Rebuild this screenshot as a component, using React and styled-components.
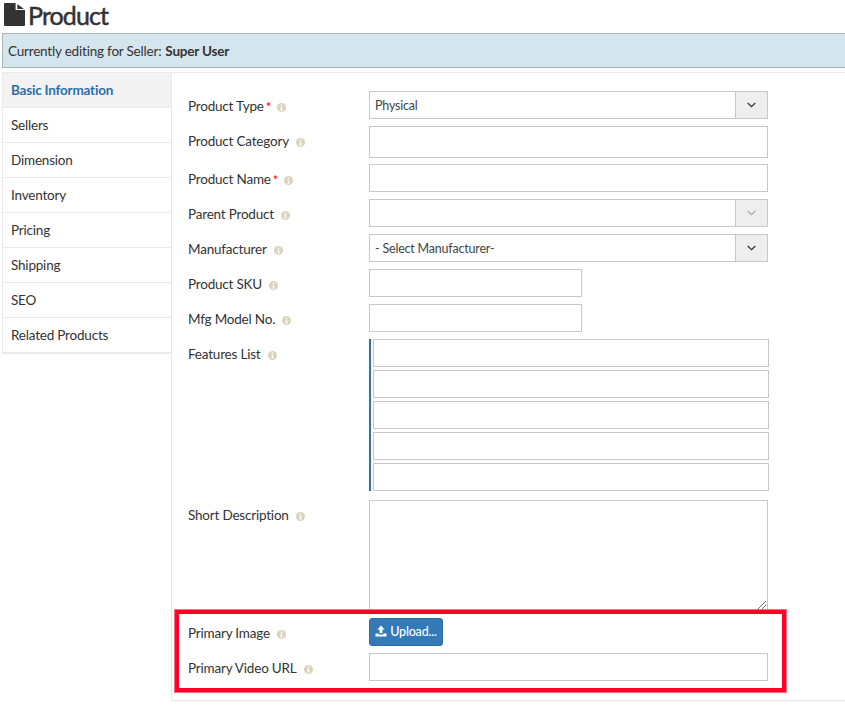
import React from 'react';
import styled, { createGlobalStyle } from 'styled-components';

const GlobalStyle = createGlobalStyle`
    html, body {
        margin: 0;
        padding: 0;
        background: #fff;
    }
    body {
        font-family: Lato, "Open Sans", sans-serif;
        font-size: 13.5px;
        letter-spacing: -0.2px;
        color: #333;
    }
    * {
        box-sizing: border-box;
    }
`;

const Page = styled.div`
    position: relative;
    width: 845px;
    height: 715px;
    overflow: hidden;
`;

const Title = styled.h1`
    display: flex;
    align-items: flex-start;
    gap: 3px;
    height: 33px;
    margin: 0;
    padding: 3px 0 0 4px;
    font-size: 25px;
    line-height: 25px;
    font-weight: 400;
    letter-spacing: -0.9px;
    color: #333;
    -webkit-text-stroke: 0.5px #333;
`;

const Banner = styled.div`
    height: 35px;
    margin-left: 2px;
    padding-left: 5px;
    display: flex;
    align-items: center;
    gap: 4px;
    background: #d5e5ed;
    border: 1px solid #a6b6bc;
    border-right: none;
`;

const Body = styled.div`
    display: flex;
    align-items: flex-start;
    margin: 4px 0 0 2px;
`;

const Sidebar = styled.ul`
    width: 169px;
    flex: none;
    margin: 0;
    padding: 0;
    list-style: none;
    border-top: 1px solid #eaeaea;
    border-left: 1px solid #eaeaea;
    border-bottom: 1px solid #eaeaea;
`;

const SideItem = styled.li`
    height: 35px;
    padding-left: 8px;
    display: flex;
    align-items: center;
    border-bottom: 1px solid #eaeaea;
    background: ${(p) => (p.$active ? '#f3f3f3' : '#fff')};
    color: ${(p) => (p.$active ? '#2d6da8' : '#333')};
    font-weight: ${(p) => (p.$active ? 700 : 400)};
`;

const Panel = styled.div`
    flex: 1;
    height: 629px;
    padding: 18px 0 0 16px;
    border-left: 1px solid #e8e8e8;
    border-top: 1px solid #eaeaea;
    border-bottom: 1px solid #e6e6e6;
`;

const Row = styled.div`
    display: flex;
    align-items: flex-start;
    margin-bottom: ${(p) => p.$gap ?? 7}px;
`;

const Label = styled.div`
    width: 181px;
    flex: none;
    display: flex;
    align-items: center;
    height: 20px;
    margin-top: 5px;
    color: #333;
`;

const Required = styled.sup`
    color: #f00;
    font-size: 13px;
    line-height: 1;
    margin: 0 -1px 0 2px;
    position: relative;
    top: 1px;
    vertical-align: super;
`;

const Info = styled.svg`
    width: 9px;
    height: 9px;
    margin-left: 7px;
    margin-top: 2px;
    flex: none;
`;

const Input = styled.div`
    width: ${(p) => p.$width || 399}px;
    height: ${(p) => p.$height || 28}px;
    flex: none;
    background: #fff;
    border: 1px solid #c8c8c8;
`;

const Select = styled(Input)`
    display: flex;
    align-items: center;
    justify-content: space-between;
    padding-left: 5px;
    font-size: 12.5px;
    color: #444;
`;

const Arrow = styled.span`
    width: 32px;
    height: 100%;
    display: flex;
    align-items: center;
    justify-content: center;
    background: #eeeeee;
    border-left: 1px solid #c8c8c8;
    color: ${(p) => (p.$disabled ? '#aaa' : '#333')};
`;

const FeatureList = styled.div`
    display: flex;
    flex-direction: column;
    gap: 3px;
    padding-left: 2px;
    border-left: 2px solid #2e75b0;
    width: 400px;
`;

const Feature = styled(Input)`
    width: 396px;
`;

const Textarea = styled(Input)`
    position: relative;
    height: 111px;
`;

const Grip = styled.svg`
    position: absolute;
    right: 0;
    bottom: 0;
    width: 10px;
    height: 10px;
`;

const UploadButton = styled.button`
    width: 74px;
    height: 28px;
    padding: 0 0 2px;
    display: flex;
    align-items: center;
    justify-content: center;
    gap: 3px;
    background: #337ab7;
    border: 1px solid #2e6da4;
    border-radius: 3px;
    color: #fff;
    font-family: inherit;
    font-size: 12.5px;
    font-weight: 500;
    letter-spacing: -0.2px;
`;

const Highlight = styled.div`
    position: absolute;
    left: 175px;
    top: 610px;
    width: 611px;
    height: 82px;
    border: 4px solid #ff0028;
    box-shadow: 0 0 0 1px #ff7088;
    pointer-events: none;
`;

function InfoIcon() {
    return (
        <Info viewBox="0 0 10 10">
            <circle cx="5" cy="5" r="5" fill="#dbd4bc" />
            <rect x="4.2" y="1.8" width="1.6" height="1.5" fill="#fff" />
            <path d="M3.6 4.2h2.2v3.2h.7v.9H3.5v-.9h.8V5.1h-.7z" fill="#fff" />
        </Info>
    );
}

function Chevron() {
    return (
        <svg width="9" height="6" viewBox="0 0 9 6">
            <path d="M.7 1 4.5 4.6 8.3 1" fill="none" stroke="currentColor" strokeWidth="1.3" />
        </svg>
    );
}

function FileIcon() {
    return (
        <svg width="21" height="23" viewBox="0 0 21 23">
            <path d="M1 0h10.6v7H21v15a1 1 0 0 1-1 1H1a1 1 0 0 1-1-1V1a1 1 0 0 1 1-1z" fill="#333" />
            <path d="M13.3 1 20 6h-6.7z" fill="#333" />
        </svg>
    );
}

function UploadIcon() {
    return (
        <svg width="12" height="12" viewBox="0 0 12 12">
            <path d="M6 0.5 9.6 4.4H7.4V8H4.6V4.4H2.4z" fill="#fff" />
            <path d="M0.5 8.6h3v.8h5v-.8h3V11.5H.5z" fill="#fff" />
        </svg>
    );
}

const sideItems = ['Basic Information', 'Sellers', 'Dimension', 'Inventory', 'Pricing', 'Shipping', 'SEO', 'Related Products'];

function FieldLabel({ text, required }) {
    return (
        <Label>
            {text}
            {required && <Required>*</Required>}
            <InfoIcon />
        </Label>
    );
}

export default function App() {
    return (
        <Page>
            <GlobalStyle />
            <Title><FileIcon />Product</Title>
            <Banner>Currently editing for Seller: <b>Super User</b></Banner>
            <Body>
                <Sidebar>
                    {sideItems.map((item, i) => (
                        <SideItem key={item} $active={i === 0}>{item}</SideItem>
                    ))}
                </Sidebar>
                <Panel>
                    <Row>
                        <FieldLabel text="Product Type" required />
                        <Select>Physical<Arrow><Chevron /></Arrow></Select>
                    </Row>
                    <Row $gap={6}>
                        <FieldLabel text="Product Category" />
                        <Input $height={32} />
                    </Row>
                    <Row>
                        <FieldLabel text="Product Name" required />
                        <Input />
                    </Row>
                    <Row>
                        <FieldLabel text="Parent Product" />
                        <Select><span /><Arrow $disabled><Chevron /></Arrow></Select>
                    </Row>
                    <Row>
                        <FieldLabel text="Manufacturer" />
                        <Select>- Select Manufacturer-<Arrow><Chevron /></Arrow></Select>
                    </Row>
                    <Row>
                        <FieldLabel text="Product SKU" />
                        <Input $width={213} />
                    </Row>
                    <Row>
                        <FieldLabel text="Mfg Model No." />
                        <Input $width={213} />
                    </Row>
                    <Row $gap={9}>
                        <FieldLabel text="Features List" />
                        <FeatureList>
                            <Feature />
                            <Feature />
                            <Feature />
                            <Feature />
                            <Feature />
                        </FeatureList>
                    </Row>
                    <Row>
                        <FieldLabel text="Short Description" />
                        <Textarea>
                            <Grip viewBox="0 0 10 10">
                                <path d="M1 9 9 1M5 9 9 5" stroke="#777" strokeWidth="1" fill="none" />
                            </Grip>
                        </Textarea>
                    </Row>
                    <Row>
                        <FieldLabel text="Primary Image" />
                        <UploadButton><UploadIcon />Upload...</UploadButton>
                    </Row>
                    <Row>
                        <FieldLabel text="Primary Video URL" />
                        <Input />
                    </Row>
                </Panel>
            </Body>
            <Highlight />
        </Page>
    );
}
